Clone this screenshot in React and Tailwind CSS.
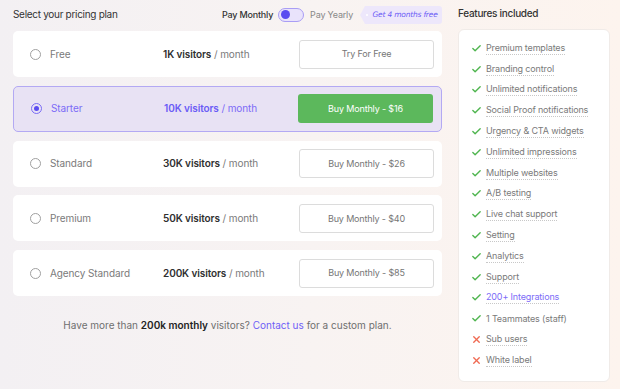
import { Check, X } from 'lucide-react';

const plans = [
  { name: 'Free', visitors: '1K visitors', cta: 'Try For Free' },
  { name: 'Starter', visitors: '10K visitors', cta: 'Buy Monthly - $16', selected: true },
  { name: 'Standard', visitors: '30K visitors', cta: 'Buy Monthly - $26' },
  { name: 'Premium', visitors: '50K visitors', cta: 'Buy Monthly - $40' },
  { name: 'Agency Standard', visitors: '200K visitors', cta: 'Buy Monthly - $85' },
];

const features = [
  { label: 'Premium templates', ok: true },
  { label: 'Branding control', ok: true },
  { label: 'Unlimited notifications', ok: true },
  { label: 'Social Proof notifications', ok: true },
  { label: 'Urgency & CTA widgets', ok: true },
  { label: 'Unlimited impressions', ok: true },
  { label: 'Multiple websites', ok: true },
  { label: 'A/B testing', ok: true },
  { label: 'Live chat support', ok: true },
  { label: 'Setting', ok: true },
  { label: 'Analytics', ok: true },
  { label: 'Support', ok: true },
  { label: '200+ Integrations', ok: true, accent: true },
  { label: '1 Teammates (staff)', ok: true, plain: true },
  { label: 'Sub users', ok: false },
  { label: 'White label', ok: false },
];

function PlanRow({ plan }) {
  const sel = plan.selected;
  return (
    <div className={`flex h-[46px] items-center rounded-[5px] pl-[17px] pr-[8px] ${sel ? 'border border-[#b3a9f3] bg-[#e8e2f4]' : 'bg-white'}`}>
      <span className={`flex size-[11px] items-center justify-center rounded-full border ${sel ? 'border-[#7a6cf5]' : 'border-[#a0a0a0]'}`}>
        {sel && <span className="size-[5px] rounded-full bg-[#5b4cf0]" />}
      </span>
      <span className={`ml-[9px] w-[113px] text-[10px] tracking-[-0.1px] ${sel ? 'text-[#7c6cf7]' : 'text-[#7a7a7a]'}`}>{plan.name}</span>
      <span className={`text-[10px] tracking-[-0.1px] ${sel ? 'text-[#7c6cf7]' : 'text-[#7a7a7a]'}`}>
        <b className={`font-semibold ${sel ? 'text-[#6b5cf6]' : 'text-[#2f2f2f]'}`}>{plan.visitors}</b> / month
      </span>
      <button className={`ml-auto h-[29px] w-[135px] rounded-[3px] text-[9px] tracking-[-0.15px] ${sel ? 'bg-[#5cb85c] text-white' : 'border border-[#dcdcdc] bg-white text-[#767676]'}`}>
        {plan.cta}
      </button>
    </div>
  );
}

export default function App() {
  return (
    <div className="flex h-[389px] w-[620px] gap-[16px] bg-linear-to-r from-[#f3f0f3] via-[#f8f3f2] to-[#fdf4ee] pl-[13px] pr-[10px] font-['Inter','Noto_Sans',sans-serif] text-[#333]">
      <div className="flex w-[429px] flex-col">
        <div className="flex h-[31px] items-center justify-between pb-[2px]">
          <h1 className="text-[10px] tracking-[-0.3px] text-[#333]">Select your pricing plan</h1>
          <div className="flex items-center">
            <span className="text-[9px] font-medium tracking-[-0.2px] text-[#333]">Pay Monthly</span>
            <span className="ml-[5px] flex h-[14px] w-[26px] items-center rounded-full border border-[#a99df5] bg-[#e9e3fb] pl-[2px]">
              <span className="size-[9px] rounded-full bg-[#5b4cf0]" />
            </span>
            <span className="ml-[6px] text-[9px] tracking-[-0.2px] text-[#888]">Pay Yearly</span>
            <span className="relative ml-[12px] flex h-[18px] w-[77px] items-center justify-center whitespace-nowrap rounded-r-[3px] bg-[#ede7fb] pl-[3px] font-['DejaVu_Sans',sans-serif] text-[7.5px] italic tracking-[-0.2px] text-[#6b5cf6]">
              <span className="absolute left-[-5px] top-0 h-0 w-0 border-y-[9px] border-r-[5px] border-y-transparent border-r-[#ede7fb]" />
              <span className="absolute left-[1px] top-[8px] size-[2px] rounded-full bg-white" />
              Get 4 months free
            </span>
          </div>
        </div>
        <div className="flex flex-col gap-[8.75px]">
          {plans.map((p) => (
            <PlanRow key={p.name} plan={p} />
          ))}
        </div>
        <p className="mt-[22px] text-center text-[10px] text-[#6f6f6f]">
          Have more than <b className="font-semibold text-[#222]">200k monthly</b> visitors?{' '}
          <span className="text-[#6f5ff6]">Contact us</span> for a custom plan.
        </p>
      </div>

      <div className="flex w-[152px] flex-col">
        <h2 className="flex h-[29px] items-center pb-[2px] text-[10px] font-medium tracking-[-0.3px] text-[#333]">Features included</h2>
        <div className="rounded-[6px] border border-[#f0ebe8] bg-white pb-[10px] pl-[12px] pt-[8px]">
          {features.map((f) => (
            <div key={f.label} className="flex h-[20.8px] items-center gap-[4px]">
              {f.ok ? (
                <Check className="size-[11px] text-[#4fb54f]" strokeWidth={3} />
              ) : (
                <X className="size-[11px] text-[#f06a52]" strokeWidth={3} />
              )}
              <span
                className={`text-[9px] leading-[12px] tracking-[-0.15px] ${f.accent ? 'text-[#7c6cf7]' : 'text-[#7a7a7a]'} ${f.plain ? '' : 'border-b border-dotted border-[#c8c8c8]'}`}
              >
                {f.label}
              </span>
            </div>
          ))}
        </div>
      </div>
    </div>
  );
}
